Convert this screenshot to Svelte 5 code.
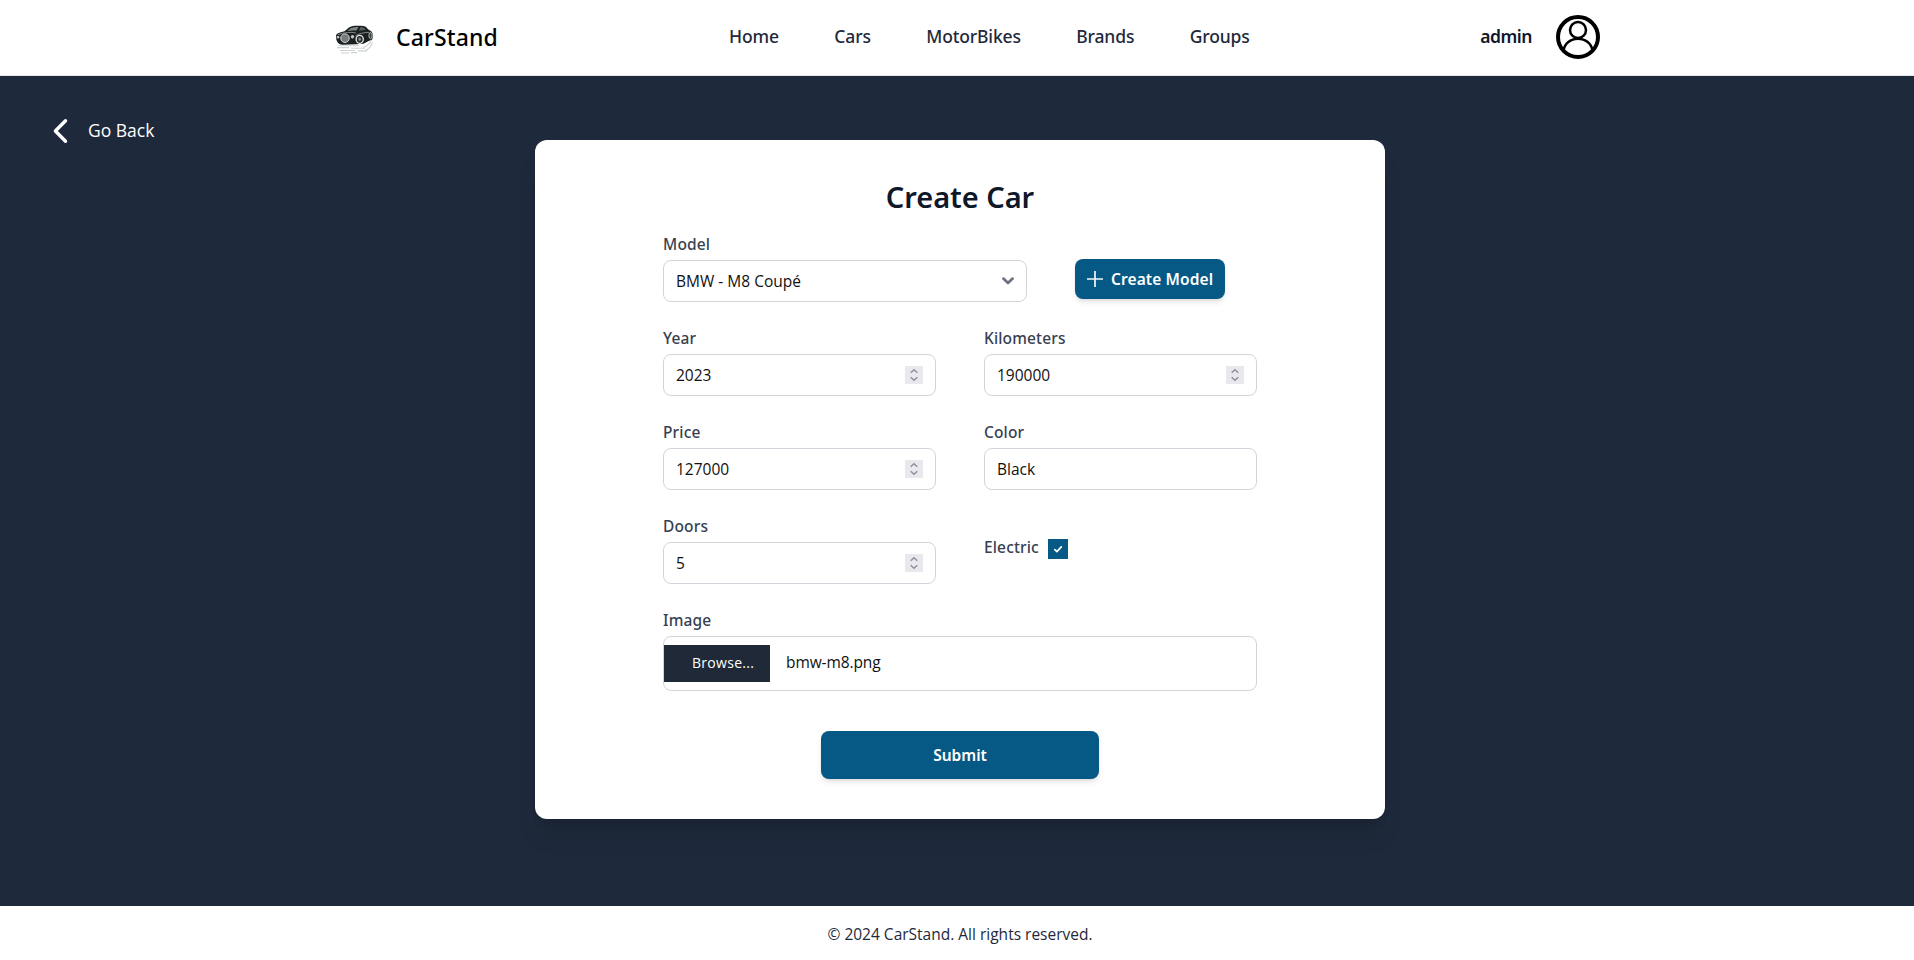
<script>
  const links = ['Home', 'Cars', 'MotorBikes', 'Brands', 'Groups'];

  let year = $state('2023');
  let kilometers = $state('190000');
  let price = $state('127000');
  let doors = $state('5');
  let color = $state('Black');
</script>

{#snippet numberField(label, value)}
  <div class="field">
    <span class="label">{label}</span>
    <div class="box">
      <span class="value">{value}</span>
      <span class="spinner">
        <svg width="18" height="18" viewBox="0 0 18 18" fill="none" stroke="#8f8f9d" stroke-width="1.5">
          <path d="M5.700 6.700 9 3.700l3.300 3M5.700 11.300l3.300 3 3.300-3" />
        </svg>
      </span>
    </div>
  </div>
{/snippet}

<div class="page">
  <header>
    <div class="brand">
      <svg class="logo" width="40" height="36" viewBox="0 0 40 36">
        <g stroke="#d0d3d3" stroke-width="1.100" fill="none">
          <path d="M4 24.800h21M3 26.600h12M17 27.300h14M6 29.500h15M24 29.900h9M7 32h8M17 31.600h6" />
          <path d="M29 26.500c4-1.300 7-4 8.500-7.500M31 30c4-2 6.500-5 7.500-9" />
        </g>
        <path d="M2 15c0-2.200 3-3.600 8.500-4.700l4.200-3.600c1.300-1 3.300-1.700 6.300-1.900l6-.1c3.500 0 5.500 1.100 7 3.600l3.500 2.300c1.700 2 1.800 5 .7 8l-4 1.600-4.700 2.600-7 .4-14 .5C4 23.200 2 20.500 2 15z" fill="#1b2021" />
        <path d="M13.500 9.900 16.500 7.200c1.800-1 4.900-1.300 8-1.300l-2 3.700c-3.500-.4-6-.2-9 .3z" fill="#7c8383" />
        <path d="M26.500 5.900c2.500 0 4 .9 5.200 2.800l-6.700 1z" fill="#596060" />
        <path d="M4 13.700c6-2.400 13-2.800 18-1.800M21.500 14.800c3-2.200 8-3.300 14-3.500" stroke="#9ca1a1" stroke-width=".8" fill="none" />
        <ellipse cx="11" cy="17.200" rx="4.300" ry="4.300" fill="#858a8a" stroke="#c8cbcb" stroke-width="1" />
        <path d="M9 14.200v6M11 13.700v7M13 14.200v6" stroke="#565d5d" stroke-width=".6" />
        <circle cx="4" cy="16.200" r="1.400" fill="#b9bcbc" />
        <circle cx="18.500" cy="15.800" r="1.700" fill="#c3c6c6" />
        <ellipse cx="25.700" cy="18.300" rx="3.600" ry="4" fill="#252a2b" stroke="#e6e8e8" stroke-width="1.300" />
        <ellipse cx="25.700" cy="18.300" rx="1.300" ry="1.700" fill="#8a9090" />
        <ellipse cx="36.500" cy="14.600" rx="1.600" ry="3" fill="#3a4041" stroke="#c5c8c8" stroke-width=".9" />
      </svg>
      <span class="name">CarStand</span>
    </div>
    <nav>
      {#each links as link}
        <a href="#top">{link}</a>
      {/each}
    </nav>
    <div class="user">
      <span class="username">admin</span>
      <svg width="44" height="44" viewBox="0 0 44 44" fill="none" stroke="#000">
        <circle cx="22" cy="22" r="20" stroke-width="4" />
        <circle cx="22" cy="15" r="8" stroke-width="2.500" />
        <path d="M7.500 35.500C8.500 28.500 14.500 23.700 22 23.700s13.500 4.800 14.500 11.800" stroke-width="2.500" />
      </svg>
    </div>
  </header>

  <main>
    <a class="back" href="#back">
      <svg width="16" height="26" viewBox="0 0 16 26" fill="none" stroke="#fff" stroke-width="3.400" stroke-linecap="round" stroke-linejoin="round">
        <path d="M12.500 2.700 2.400 13 12.500 23.300" />
      </svg>
      <span>Go Back</span>
    </a>

    <section class="card">
      <h1>Create Car</h1>
      <div class="form">
        <div class="model-row">
          <div class="field model">
            <span class="label">Model</span>
            <div class="box">
              <span class="value">BMW - M8 Coupé</span>
              <svg width="12" height="8" viewBox="0 0 12 8" fill="none" stroke="#6b7280" stroke-width="2.700" stroke-linecap="round" stroke-linejoin="round">
                <path d="M1.400 1.600 6 6l4.600-4.400" />
              </svg>
            </div>
          </div>
          <button class="create" type="button">
            <svg width="16" height="16" viewBox="0 0 16 16" stroke="#fff" stroke-width="1.700" stroke-opacity=".95">
              <path d="M8 0v16M0 8h16" />
            </svg>
            <span>Create Model</span>
          </button>
        </div>

        <div class="grid">
          {@render numberField('Year', year)}
          {@render numberField('Kilometers', kilometers)}
          {@render numberField('Price', price)}
          <div class="field">
            <span class="label">Color</span>
            <div class="box"><span class="value">{color}</span></div>
          </div>
          {@render numberField('Doors', doors)}
          <div class="electric">
            <span class="label">Electric</span>
            <span class="check">
              <svg width="20" height="20" viewBox="0 0 20 20" fill="none" stroke="#fff" stroke-width="1.700" stroke-linecap="round" stroke-linejoin="round">
                <path d="m6.800 10.600 2.100 2 4.400-4.700" />
              </svg>
            </span>
          </div>
        </div>

        <div class="field">
          <span class="label">Image</span>
          <div class="box file">
            <span class="browse">Browse...</span>
            <span class="filename">bmw-m8.png</span>
          </div>
        </div>

        <button class="submit" type="button">Submit</button>
      </div>
    </section>
  </main>

  <footer>© 2024 CarStand. All rights reserved.</footer>
</div>

<style>
  :global(body) {
    background: #fff;
  }

  .page {
    height: 960px;
    display: flex;
    flex-direction: column;
    overflow: hidden;
    font-family: 'Open Sans', 'Noto Sans', sans-serif;
    font-size: 15.5px;
    line-height: 24px;
    color: #1e293b;
  }

  .page * {
    box-sizing: border-box;
  }

  a {
    color: inherit;
    text-decoration: none;
  }

  header {
    flex: none;
    height: 76px;
    padding: 0 314px 0 334px;
    border-bottom: 1px solid #e5e7eb;
    display: grid;
    grid-template-columns: 395px 1fr auto;
    align-items: center;
    font-family: 'Noto Sans', sans-serif;
    font-size: 17.5px;
    font-weight: 500;
  }

  .brand {
    display: flex;
    align-items: center;
    gap: 22px;
  }

  .logo {
    display: block;
    margin-top: 2px;
  }

  .name {
    margin-top: -2px;
    font-size: 23px;
    line-height: 32px;
    letter-spacing: 0.15px;
    color: #000;
  }

  nav {
    display: flex;
    gap: 55.5px;
    letter-spacing: -0.15px;
  }

  nav a {
    margin-top: -3px;
  }

  .user {
    display: flex;
    align-items: center;
    gap: 24px;
  }

  .username {
    margin-top: -3px;
    font-weight: 600;
    letter-spacing: -0.45px;
    color: #0f172a;
  }

  .user svg {
    display: block;
    margin-top: -1px;
  }

  main {
    flex: none;
    height: 830px;
    background: #1e293b;
    display: grid;
    grid-template-columns: 482px 850px;
    align-items: start;
    padding: 0 0 0 53px;
  }

  .back {
    margin-top: 42px;
    display: flex;
    align-items: center;
    gap: 19px;
    font-size: 17.5px;
    color: #fff;
  }

  .back span {
    margin-top: -2px;
  }

  .card {
    margin-top: 64px;
    height: 679px;
    padding: 40px 128px;
    border-radius: 12px;
    background: #fff;
    box-shadow: 0 20px 25px -5px rgba(0, 0, 0, 0.1), 0 8px 10px -6px rgba(0, 0, 0, 0.1);
  }

  h1 {
    margin: -1px 0 17px;
    font-family: 'Noto Sans', sans-serif;
    font-size: 29px;
    line-height: 36px;
    font-weight: 650;
    letter-spacing: -0.05px;
    text-align: center;
    color: #0f172a;
  }

  .form {
    display: flex;
    flex-direction: column;
    gap: 24px;
  }

  .field {
    display: flex;
    flex-direction: column;
    gap: 4px;
  }

  .label {
    font-family: 'Noto Sans', sans-serif;
    font-weight: 500;
    letter-spacing: 0.15px;
    color: #374151;
  }

  .box {
    height: 42px;
    border: 1px solid #d1d5db;
    border-radius: 8px;
    padding: 0 12px;
    display: flex;
    align-items: center;
    justify-content: space-between;
    color: #111;
  }

  .spinner {
    width: 18px;
    height: 18px;
    background: #e9e9ed;
  }

  .spinner svg,
  .check svg {
    display: block;
  }

  .model-row {
    display: flex;
    align-items: flex-start;
    gap: 48px;
  }

  .model {
    width: 364px;
  }

  button {
    border: 0;
    border-radius: 8px;
    background: #075985;
    color: #fff;
    font: 600 15.5px/24px 'Noto Sans', sans-serif;
    box-shadow: 0 4px 6px -1px rgba(0, 0, 0, 0.1), 0 2px 4px -2px rgba(0, 0, 0, 0.1);
  }

  .create {
    width: 150px;
    height: 40px;
    margin-top: 27px;
    padding: 0 0 0 12px;
    display: flex;
    align-items: center;
    gap: 8px;
    letter-spacing: 0.1px;
  }

  .grid {
    display: grid;
    grid-template-columns: 273px 273px;
    gap: 24px 48px;
  }

  .electric {
    display: flex;
    align-items: flex-start;
    gap: 9px;
    padding-top: 21px;
  }

  .check {
    width: 20px;
    height: 20px;
    margin-top: 4px;
    background: #075985;
  }

  .file {
    height: 55px;
    padding: 0;
    justify-content: flex-start;
    gap: 16px;
  }

  .browse {
    width: 106px;
    height: 37px;
    padding: 0 0 0 28px;
    background: #1f2937;
    color: #fff;
    font-size: 14px;
    line-height: 36px;
    letter-spacing: 0.3px;
  }

  .filename {
    margin-top: -4px;
    letter-spacing: -0.1px;
  }

  .submit {
    width: 278px;
    height: 48px;
    margin-top: 16px;
    align-self: center;
  }

  footer {
    flex: none;
    height: 54px;
    padding-top: 16px;
    padding-left: 6px;
    text-align: center;
  }
</style>
